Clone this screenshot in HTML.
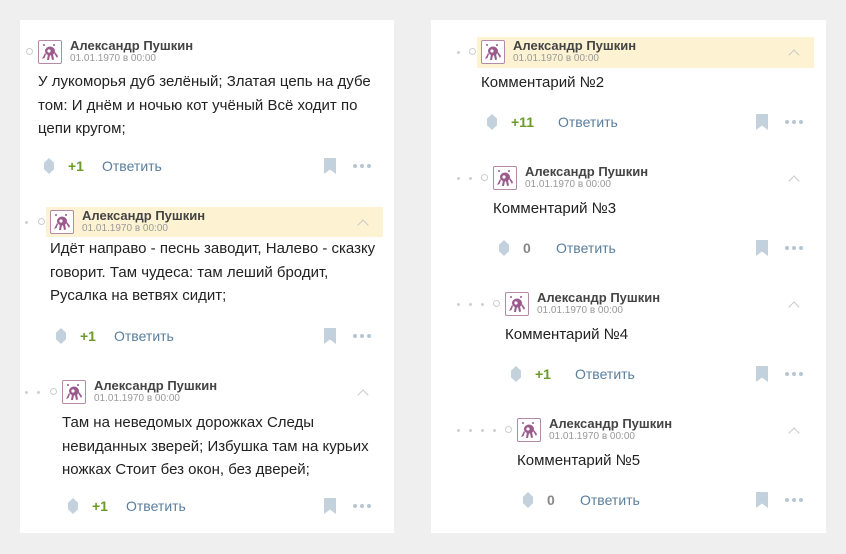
<!DOCTYPE html><html><head><meta charset="utf-8"><style>
body{margin:0;width:846px;height:554px;background:#efefef;position:relative;overflow:hidden;font-family:"Liberation Sans",Arial,sans-serif}
.p{position:absolute;background:#fff}
.nm{position:absolute;font-size:13px;font-weight:bold;color:#444;white-space:nowrap;line-height:16px}
.dt{position:absolute;font-size:10px;color:#999;white-space:nowrap;line-height:12px}
.tx{position:absolute;font-size:15px;color:#222;line-height:23.5px}
.av{position:absolute;width:22px;height:22px;border:1px solid #b48aa8;border-radius:2px;background:#fff}
.dot{position:absolute;width:3px;height:3px;border-radius:50%;background:#d0d0d0}
.ring{position:absolute;width:5px;height:5px;border-radius:50%;border:1.5px solid #ccc}
.hl{position:absolute;background:#fdf3d3}
.dia{position:absolute;width:10px;height:16px;background:#c3d1dd;clip-path:polygon(50% 0,100% 30%,100% 70%,50% 100%,0 70%,0 30%)}
.sc{position:absolute;font-size:14px;font-weight:bold;color:#6b9a2a;line-height:16px}
.sc0{color:#888}
.rp{position:absolute;font-size:14px;color:#5a7e9c;line-height:16px}
.bm{position:absolute;width:12px;height:16px;background:#c3d1dd;clip-path:polygon(0 0,100% 0,100% 100%,50% 72%,0 100%)}
.md{position:absolute;width:24px;height:4px;white-space:nowrap;font-size:0}
.md i{display:inline-block;width:4px;height:4px;border-radius:50%;background:#b8c6d2;margin-right:3px}
.ch{position:absolute;width:7px;height:7px;border-left:1.5px solid #c8c8c8;border-top:1.5px solid #c8c8c8;transform:rotate(45deg)}
</style></head><body>
<div class="p" style="left:20px;top:20px;width:374px;height:513px"></div>
<div class="p" style="left:431px;top:20px;width:395px;height:513px"></div>

<div class="hl" style="left:46px;top:207px;width:337px;height:30px"></div>
<div class="hl" style="left:477px;top:37px;width:337px;height:31px"></div>

<div id="c"></div>
<script>
var s='';
function av(x,y){return '<div class="av" style="left:'+x+'px;top:'+(y-12)+'px"><svg width="22" height="22" viewBox="0 0 22 22"><g fill="#9a5a8c"><ellipse cx="11" cy="10" rx="5" ry="4.5"/><path d="M6 12 L3 18 L5.5 17 L7 13Z M9 13 L8 19 L10 19 L11 14Z M12 14 L13 19 L15 18.5 L14 13Z M15 12 L18 17 L19 15 L16 11Z"/><circle cx="5" cy="4" r="1"/><circle cx="15" cy="4" r="1"/></g><circle cx="10" cy="10" r="1.6" fill="#fff"/></svg></div>';}
function cm(o){
 var y=o.y;
 for(var i=0;i<o.nd;i++){s+='<div class="dot" style="left:'+(o.d0+12*i-1)+'px;top:'+(y-1)+'px"></div>';}
 s+='<div class="ring" style="left:'+(o.rg||o.ax-12)+'px;top:'+(y-4)+'px"></div>';
 s+=av(o.ax,y);
 s+='<div class="nm" style="left:'+(o.ax+32)+'px;top:'+(y-14)+'px">Александр Пушкин</div>';
 s+='<div class="dt" style="left:'+(o.ax+32)+'px;top:'+(y+1)+'px">01.01.1970 в 00:00</div>';
 if(o.ch)s+='<div class="ch" style="left:'+(o.ch-4)+'px;top:'+(y-1)+'px"></div>';
 s+='<div class="tx" style="left:'+o.ax+'px;top:'+(o.ty-12)+'px;width:'+o.tw+'px">'+o.t+'</div>';
 var ay=o.ay;
 s+='<div class="dia" style="left:'+(o.ax+6)+'px;top:'+(ay-8)+'px"></div>';
 s+='<div class="sc'+(o.sc=='0'?' sc0':'')+'" style="left:'+o.sx+'px;top:'+(ay-8)+'px">'+o.sc+'</div>';
 s+='<div class="rp" style="left:'+o.rx+'px;top:'+(ay-8)+'px">Ответить</div>';
 s+='<div class="bm" style="left:'+(o.bx-6)+'px;top:'+(ay-8)+'px"></div>';
 s+='<div class="md" style="left:'+(o.bx+23)+'px;top:'+(ay-2)+'px"><i></i><i></i><i></i></div>';
}
cm({y:52,nd:0,d0:0,ax:38,rg:26,ch:0,ty:82,tw:340,t:'У лукоморья дуб зелёный; Златая цепь на дубе том: И днём и ночью кот учёный Всё ходит по цепи кругом;',ay:166,sc:'+1',sx:68,rx:102,bx:330});
cm({y:222,nd:1,d0:26,ax:50,ch:363,ty:249,tw:330,t:'Идёт направо - песнь заводит, Налево - сказку говорит. Там чудеса: там леший бродит, Русалка на ветвях сидит;',ay:336,sc:'+1',sx:80,rx:114,bx:330});
cm({y:392,nd:2,d0:26,ax:62,ch:363,ty:423,tw:325,t:'Там на неведомых дорожках Следы невиданных зверей; Избушка там на курьих ножках Стоит без окон, без дверей;',ay:506,sc:'+1',sx:92,rx:126,bx:330});
cm({y:52,nd:1,d0:458,ax:481,ch:794,ty:83,tw:300,t:'Комментарий №2',ay:122,sc:'+11',sx:511,rx:558,bx:762});
cm({y:178,nd:2,d0:458,ax:493,ch:794,ty:209,tw:300,t:'Комментарий №3',ay:248,sc:'0',sx:523,rx:556,bx:762});
cm({y:304,nd:3,d0:458,ax:505,ch:794,ty:335,tw:300,t:'Комментарий №4',ay:374,sc:'+1',sx:535,rx:575,bx:762});
cm({y:430,nd:4,d0:458,ax:517,ch:794,ty:461,tw:300,t:'Комментарий №5',ay:500,sc:'0',sx:547,rx:580,bx:762});
document.getElementById('c').innerHTML=s;
</script>
</body></html>
